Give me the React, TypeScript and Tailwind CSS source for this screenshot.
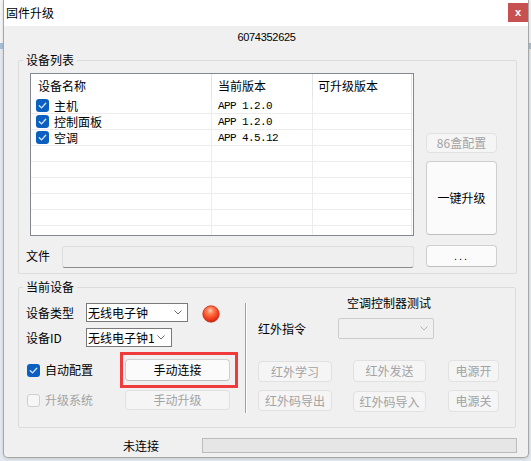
import React from "react";

const Check = ({ checked = true, disabled = false }: { checked?: boolean; disabled?: boolean }) =>
  checked ? (
    <svg width="13" height="13" viewBox="0 0 13 13" className="shrink-0">
      <rect x="0" y="0" width="13" height="13" rx="3" fill="#0a5fc0" />
      <path d="M3.3 6.8 L5.5 8.9 L9.7 4.3" fill="none" stroke="#dce9f8" strokeWidth="1.3" strokeLinecap="round" strokeLinejoin="round" />
    </svg>
  ) : (
    <div
      className={`w-[13px] h-[13px] shrink-0 rounded-[3px] border ${
        disabled ? "border-[#cfcfcf] bg-[#f6f6f6]" : "border-[#8a8a8a] bg-white"
      }`}
    />
  );

const Chevron = ({ color = "#6a6a6a" }: { color?: string }) => (
  <svg width="8" height="5" viewBox="0 0 8 5" className="shrink-0">
    <path d="M0.5 0.5 L4 4 L7.5 0.5" fill="none" stroke={color} strokeWidth="1" />
  </svg>
);

const Btn = ({
  children,
  className = "",
  disabled = false,
}: {
  children: React.ReactNode;
  className?: string;
  disabled?: boolean;
}) => (
  <div
    className={`flex items-center justify-center rounded-[4px] border ${
      disabled
        ? "border-[#e1e1e1] bg-[#f5f5f5] text-[#a3a3a3]"
        : "border-[#cfcfcf] border-b-[#bdbdbd] bg-[#fbfbfb] text-black"
    } ${className}`}
  >
    {children}
  </div>
);

const GroupBox = ({
  title,
  className = "",
  children,
}: {
  title: string;
  className?: string;
  children: React.ReactNode;
}) => (
  <div className={`relative border border-[#dcdcdc] rounded-[2px] ${className}`}>
    <span className="absolute left-[4px] top-[-9px] px-[3px] bg-[#f0f0f0] leading-[16px]">{title}</span>
    {children}
  </div>
);

const devices = [
  { name: "主机", ver: "APP 1.2.0" },
  { name: "控制面板", ver: "APP 1.2.0" },
  { name: "空调", ver: "APP 4.5.12" },
];

const emptyRows = Array.from({ length: 6 });

const RedDot = () => (
  <svg width="18" height="18" viewBox="0 0 18 18" className="shrink-0">
    <defs>
      <radialGradient id="dotFill" cx="45%" cy="30%" r="70%">
        <stop offset="0" stopColor="#ffd2bd" />
        <stop offset="0.3" stopColor="#ff7a4c" />
        <stop offset="0.75" stopColor="#ee3a1c" />
        <stop offset="1" stopColor="#c9200f" />
      </radialGradient>
    </defs>
    <circle cx="9" cy="9" r="8.2" fill="url(#dotFill)" stroke="#c42a18" strokeWidth="0.8" />
  </svg>
);

export default function App() {
  return (
    <div className="relative w-[531px] h-[461px] overflow-hidden bg-[#e4e9f0] text-[12px] leading-[16px] text-black font-['Noto_Sans_CJK_SC','Noto_Sans',sans-serif]">
      {/* window behind the dialog */}
      <div className="absolute left-0 top-0 w-[531px] h-[43px] bg-[#f4f5f7]" />
      <div className="absolute left-0 top-[43px] w-[531px] h-[6px] bg-[#a9bfd9]" />

      {/* dialog */}
      <div className="relative z-10 ml-[3px] w-[526px] h-[458px] flex flex-col bg-[#f0f0f0] border-x border-b border-[#a7a7a7] rounded-b-[5px] shadow-[0_1px_3px_rgba(0,0,0,0.15)]">
        {/* title bar */}
        <div className="h-[26px] bg-white flex items-start">
          <span className="pl-[2px] mt-[5px] text-[12px] leading-[16px]">固件升级</span>
          <div className="ml-auto mt-[3px] w-[20px] h-[19px] bg-[#c75050] flex items-center justify-center text-white text-[11px] font-bold leading-none font-['Liberation_Sans',sans-serif]">
            x
          </div>
        </div>

        {/* serial number */}
        <div className="h-[22px] flex items-center justify-center font-['Liberation_Sans',sans-serif] text-[11px] tracking-[-0.3px] pl-[1px]">
          6074352625
        </div>

        {/* device list */}
        <GroupBox title="设备列表" className="ml-[14px] mt-[12px] w-[499px] h-[214px] pt-[12px] pl-[7px]">
          <div className="flex ml-[4px]">
            <div className="w-[384px] h-[163px] border border-[#828790] bg-white overflow-hidden">
              <div className="flex h-[24px]">
                <div className="w-[181px] pl-[7px] flex items-center border-r border-[#e5e5e5]">设备名称</div>
                <div className="w-[101px] pl-[6px] flex items-center border-r border-[#e5e5e5]">当前版本</div>
                <div className="w-[99px] pl-[5px] flex items-center border-r border-[#e5e5e5]">可升级版本</div>
              </div>
              {devices.map((d) => (
                <div key={d.name} className="flex h-[16px] border-b border-[#ececec]">
                  <div className="w-[181px] pl-[5px] flex items-center gap-[5px] border-r border-[#ececec]">
                    <Check />
                    <span className="leading-[15px]">{d.name}</span>
                  </div>
                  <div className="w-[101px] pl-[6px] flex items-center border-r border-[#ececec] font-['Liberation_Mono',monospace] text-[11px] tracking-[-0.6px]">
                    {d.ver}
                  </div>
                  <div className="w-[99px] border-r border-[#ececec]" />
                </div>
              ))}
              {emptyRows.map((_, i) => (
                <div key={i} className="flex h-[16px] border-b border-[#ececec]">
                  <div className="w-[181px] border-r border-[#ececec]" />
                  <div className="w-[101px] border-r border-[#ececec]" />
                  <div className="w-[99px] border-r border-[#ececec]" />
                </div>
              ))}
            </div>
            <div className="ml-[12px] w-[71px] h-[162px] flex flex-col justify-end gap-[8px]">
              <Btn disabled className="h-[20px]">86盒配置</Btn>
              <Btn className="h-[74px] bg-[#f7f7f7]">一键升级</Btn>
            </div>
          </div>
          <div className="flex items-center mt-[9px] h-[22px]">
            <span className="w-[36px]">文件</span>
            <div className="w-[352px] h-[22px] mt-[2px] rounded-[3px] border border-[#dedede] border-b-[#8c8c8c] bg-[#efefef]" />
            <Btn className="ml-[12px] w-[71px] h-[22px] tracking-[2px] font-['Liberation_Sans',sans-serif] text-[11px]">...</Btn>
          </div>
        </GroupBox>

        {/* current device */}
        <GroupBox title="当前设备" className="ml-[14px] mt-[13px] w-[498px] h-[141px] flex">
          {/* left: device selection */}
          <div className="w-[226px] pl-[7px] pt-[15px] flex flex-col">
            <div className="flex items-center h-[19px]">
              <span className="w-[60px]">设备类型</span>
              <div className="w-[102px] h-[19px] border border-[#7a7a7a] bg-white flex items-center pl-[1px] pr-[5px]">
                <span className="flex-1 leading-[15px]">无线电子钟</span>
                <Chevron />
              </div>
              <div className="ml-[14px] mt-[2px]">
                <RedDot />
              </div>
            </div>
            <div className="flex items-center h-[19px] mt-[6px]">
              <span className="w-[60px]">设备ID</span>
              <div className="w-[86px] h-[19px] border border-[#7a7a7a] bg-white flex items-center pl-[1px] pr-[6px]">
                <span className="flex-1 leading-[15px]">无线电子钟1</span>
                <Chevron />
              </div>
            </div>
            <div className="flex items-center h-[22px] mt-[12px]">
              <div className="w-[99px] flex items-center gap-[5px] pl-[1px]">
                <Check />
                <span>自动配置</span>
              </div>
              <Btn className="w-[105px] h-[22px]">手动连接</Btn>
            </div>
            <div className="flex items-center h-[20px] mt-[9px]">
              <div className="w-[99px] flex items-center gap-[5px] pl-[1px] text-[#a3a3a3]">
                <Check checked={false} disabled />
                <span>升级系统</span>
              </div>
              <Btn disabled className="w-[105px] h-[20px]">手动升级</Btn>
            </div>
          </div>

          {/* separator */}
          <div className="mt-[15px] h-[110px] w-[2px] border-l border-[#a0a0a0] border-r border-r-white" />

          {/* right: air conditioner controller test */}
          <div className="ml-[11px] pt-[7px] flex flex-col">
            <div className="pl-[89px] h-[16px]">空调控制器测试</div>
            <div className="flex items-center h-[21px] mt-[7px]">
              <span className="w-[80px]">红外指令</span>
              <div className="w-[96px] h-[21px] rounded-[2px] border border-[#cccccc] bg-[#f0f0f0] flex items-center justify-end pr-[5px]">
                <Chevron color="#b5b5b5" />
              </div>
            </div>
            <div className="flex mt-[21px] h-[22px]">
              <Btn disabled className="w-[74px] h-[21px] mt-[1px]">红外学习</Btn>
              <Btn disabled className="ml-[21px] w-[73px] h-[22px]">红外发送</Btn>
              <Btn disabled className="ml-[22px] w-[51px] h-[22px]">电源开</Btn>
            </div>
            <div className="flex mt-[8px] h-[22px]">
              <Btn disabled className="w-[74px] h-[21px]">红外码导出</Btn>
              <Btn disabled className="ml-[21px] w-[73px] h-[21px] mt-[1px]">红外码导入</Btn>
              <Btn disabled className="ml-[22px] w-[51px] h-[22px]">电源关</Btn>
            </div>
          </div>
        </GroupBox>

        {/* status */}
        <div className="flex items-center mt-[10px] h-[15px]">
          <span className="ml-[119px] w-[36px]">未连接</span>
          <div className="ml-[43px] w-[315px] h-[15px] border border-[#bcbcbc] bg-[#e6e6e6]" />
        </div>
      </div>

      {/* highlight frame around the connect button */}
      <div className="absolute z-20 left-[120px] top-[352px] w-[118px] h-[36px] border-[3px] border-[#ef3b3b]" />
    </div>
  );
}
